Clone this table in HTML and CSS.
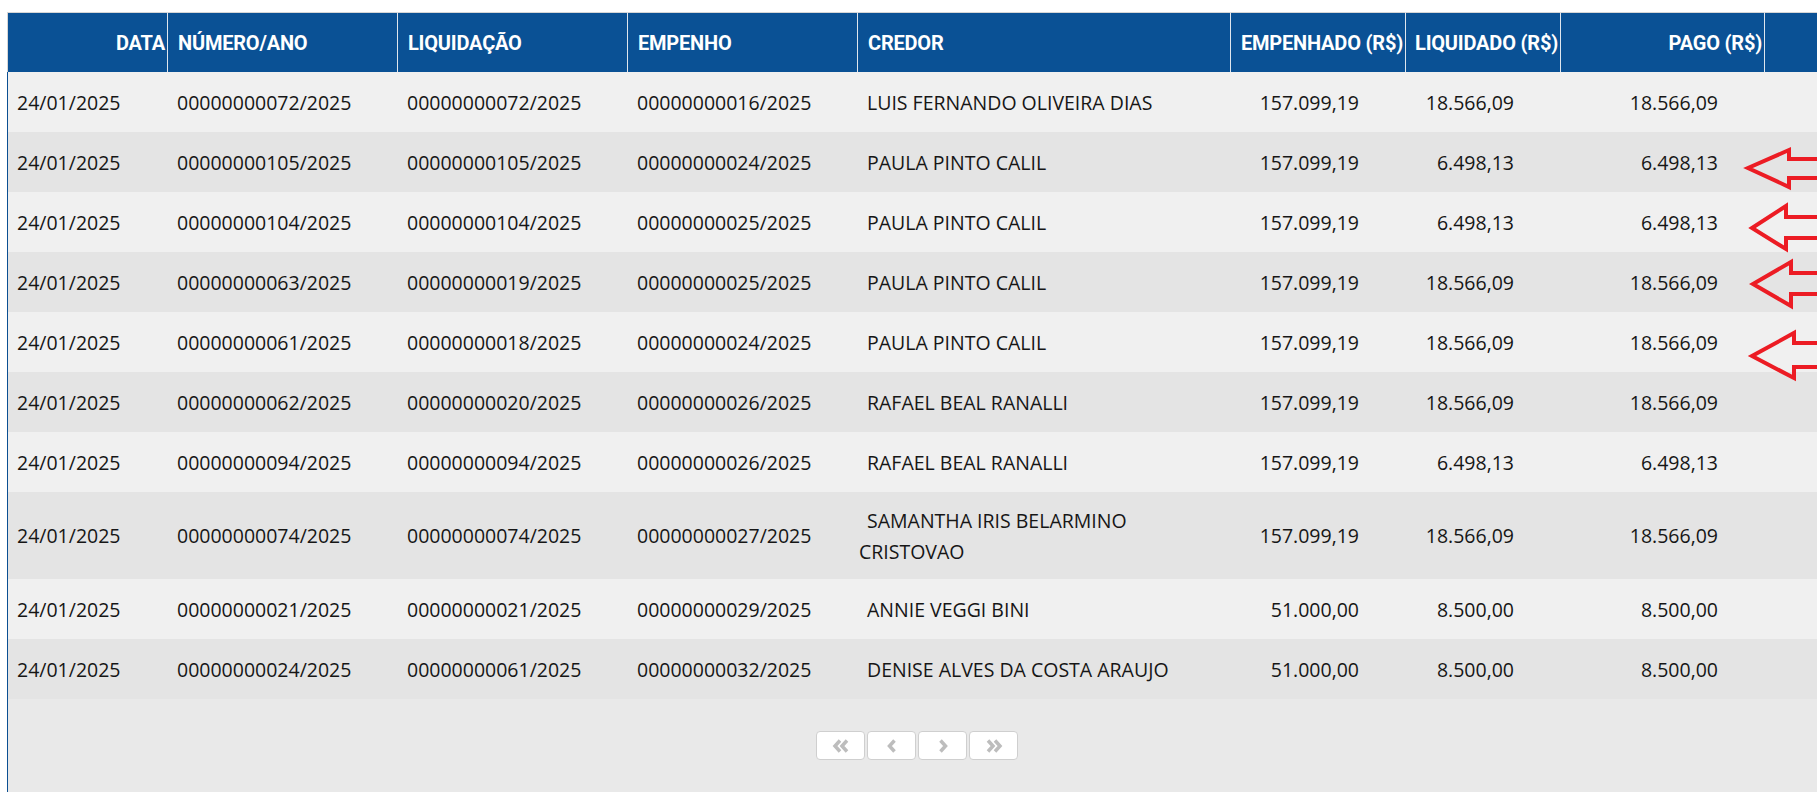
FILE: index.html
```html
<!DOCTYPE html>
<html lang="pt-BR">
<head>
<meta charset="utf-8">
<title>Liquidações</title>
<link rel="stylesheet" href="styles.css">
</head>
<body>
<div class="wrap">
  <table class="grid">
    <thead>
      <tr>
        <th class="c-data right">DATA</th>
        <th class="c-num">NÚMERO/ANO</th>
        <th class="c-num">LIQUIDAÇÃO</th>
        <th class="c-num">EMPENHO</th>
        <th class="c-credor">CREDOR</th>
        <th class="c-emp right">EMPENHADO (R$)</th>
        <th class="c-liq right">LIQUIDADO (R$)</th>
        <th class="c-pago right">PAGO (R$)</th>
        <th class="c-last"></th>
      </tr>
    </thead>
    <tbody>
      <tr><td>24/01/2025</td><td>00000000072/2025</td><td>00000000072/2025</td><td>00000000016/2025</td><td class="credor">LUIS FERNANDO OLIVEIRA DIAS</td><td class="val">157.099,19</td><td class="val">18.566,09</td><td class="val">18.566,09</td><td></td></tr>
      <tr><td>24/01/2025</td><td>00000000105/2025</td><td>00000000105/2025</td><td>00000000024/2025</td><td class="credor">PAULA PINTO CALIL</td><td class="val">157.099,19</td><td class="val">6.498,13</td><td class="val">6.498,13</td><td></td></tr>
      <tr><td>24/01/2025</td><td>00000000104/2025</td><td>00000000104/2025</td><td>00000000025/2025</td><td class="credor">PAULA PINTO CALIL</td><td class="val">157.099,19</td><td class="val">6.498,13</td><td class="val">6.498,13</td><td></td></tr>
      <tr><td>24/01/2025</td><td>00000000063/2025</td><td>00000000019/2025</td><td>00000000025/2025</td><td class="credor">PAULA PINTO CALIL</td><td class="val">157.099,19</td><td class="val">18.566,09</td><td class="val">18.566,09</td><td></td></tr>
      <tr><td>24/01/2025</td><td>00000000061/2025</td><td>00000000018/2025</td><td>00000000024/2025</td><td class="credor">PAULA PINTO CALIL</td><td class="val">157.099,19</td><td class="val">18.566,09</td><td class="val">18.566,09</td><td></td></tr>
      <tr><td>24/01/2025</td><td>00000000062/2025</td><td>00000000020/2025</td><td>00000000026/2025</td><td class="credor">RAFAEL BEAL RANALLI</td><td class="val">157.099,19</td><td class="val">18.566,09</td><td class="val">18.566,09</td><td></td></tr>
      <tr><td>24/01/2025</td><td>00000000094/2025</td><td>00000000094/2025</td><td>00000000026/2025</td><td class="credor">RAFAEL BEAL RANALLI</td><td class="val">157.099,19</td><td class="val">6.498,13</td><td class="val">6.498,13</td><td></td></tr>
      <tr><td>24/01/2025</td><td>00000000074/2025</td><td>00000000074/2025</td><td>00000000027/2025</td><td class="credor">SAMANTHA IRIS BELARMINO CRISTOVAO</td><td class="val">157.099,19</td><td class="val">18.566,09</td><td class="val">18.566,09</td><td></td></tr>
      <tr><td>24/01/2025</td><td>00000000021/2025</td><td>00000000021/2025</td><td>00000000029/2025</td><td class="credor">ANNIE VEGGI BINI</td><td class="val">51.000,00</td><td class="val">8.500,00</td><td class="val">8.500,00</td><td></td></tr>
      <tr><td>24/01/2025</td><td>00000000024/2025</td><td>00000000061/2025</td><td>00000000032/2025</td><td class="credor">DENISE ALVES DA COSTA ARAUJO</td><td class="val">51.000,00</td><td class="val">8.500,00</td><td class="val">8.500,00</td><td></td></tr>
    </tbody>
  </table>
  <div class="pager">
    <button class="pg-btn" type="button" aria-label="Primeira">
      <svg width="18" height="14" viewBox="0 0 18 14"><polyline points="8,1.5 3,7 8,12.5"/><polyline points="15,1.5 10,7 15,12.5"/></svg>
    </button>
    <button class="pg-btn" type="button" aria-label="Anterior">
      <svg width="10" height="14" viewBox="0 0 10 14"><polyline points="7.5,1.5 2.5,7 7.5,12.5"/></svg>
    </button>
    <button class="pg-btn" type="button" aria-label="Próxima">
      <svg width="10" height="14" viewBox="0 0 10 14"><polyline points="2.5,1.5 7.5,7 2.5,12.5"/></svg>
    </button>
    <button class="pg-btn" type="button" aria-label="Última">
      <svg width="18" height="14" viewBox="0 0 18 14"><polyline points="3,1.5 8,7 3,12.5"/><polyline points="10,1.5 15,7 10,12.5"/></svg>
    </button>
  </div>
</div>
<svg class="marks" width="1817" height="792" viewBox="0 0 1817 792">
  <polyline points="1830,159 1789,159 1789,150 1748,168 1789,187 1789,178 1830,178"/>
  <polyline points="1830,217 1786,217 1786,206 1752,228 1786,249 1786,238 1830,238"/>
  <polyline points="1830,273 1791,273 1791,262 1753,284 1791,306 1791,294 1830,294"/>
  <polyline points="1830,343 1794,343 1794,333 1752,356 1794,378 1794,367 1830,367"/>
</svg>
</body>
</html>
```
FILE: styles.css
```css
* { box-sizing: border-box; }

html, body {
  margin: 0;
  height: 792px;
  overflow: hidden;
}

body {
  background: #ffffff;
  position: relative;
  font-family: "Open Sans", "Noto Sans", sans-serif;
}

.wrap {
  margin-left: 7px;
  padding-top: 12px;
  width: 1819px;
  height: 792px;
  display: flex;
  flex-direction: column;
}

.grid {
  width: 1819px;
  table-layout: fixed;
  border-collapse: separate;
  border-spacing: 0;
}

.grid thead tr { height: 60px; }

.grid th {
  background: #0a5195;
  color: #ffffff;
  font-family: Roboto, "Liberation Sans", sans-serif;
  font-weight: 700;
  font-size: 20px;
  letter-spacing: -0.2px;
  text-align: left;
  white-space: nowrap;
  overflow: hidden;
  padding: 0 0 0 10px;
  border-top: 1px solid #d6d6d6;
  border-left: 1px solid #dfe6ee;
  vertical-align: middle;
}

.grid th:first-child { border-left-color: #d6d6d6; }

.grid th.right {
  text-align: right;
  padding: 0 2px 0 0;
}

.c-data { width: 160px; }
.c-num { width: 230px; }
.c-credor { width: 373px; }
.c-emp { width: 175px; }
.c-liq { width: 155px; }
.c-pago { width: 204px; }
.c-last { width: 62px; }

.grid tbody tr { height: 60px; background: #f0f0f0; }
.grid tbody tr:nth-child(even) { background: #e4e4e4; }

.grid td {
  font-size: 19.5px;
  line-height: 31px;
  color: #161616;
  padding: 12.5px 10px;
  vertical-align: middle;
  white-space: nowrap;
}

.grid td:first-child {
  border-left: 1px solid #0b4f92;
  padding-left: 9px;
}

.grid td.credor {
  white-space: normal;
  padding-left: 2px;
  text-indent: 8px;
}

.grid td.val {
  text-align: right;
  padding-right: 46px;
}

.pager {
  flex: 1;
  background: #e9e9e9;
  border-left: 1px solid #0b4f92;
  display: flex;
  justify-content: center;
  align-items: flex-start;
  gap: 2px;
  padding-top: 32px;
}

.pg-btn {
  width: 49px;
  height: 29px;
  background: #ffffff;
  border: 1px solid #cfcfcf;
  border-radius: 4px;
  padding: 0;
  display: flex;
  align-items: center;
  justify-content: center;
}

.pg-btn svg polyline {
  fill: none;
  stroke: #bdbdbd;
  stroke-width: 3.5;
}

.marks {
  position: absolute;
  left: 0;
  top: 0;
  pointer-events: none;
}

.marks polyline {
  fill: none;
  stroke: #ec1c24;
  stroke-width: 4;
  stroke-linejoin: miter;
}
```
